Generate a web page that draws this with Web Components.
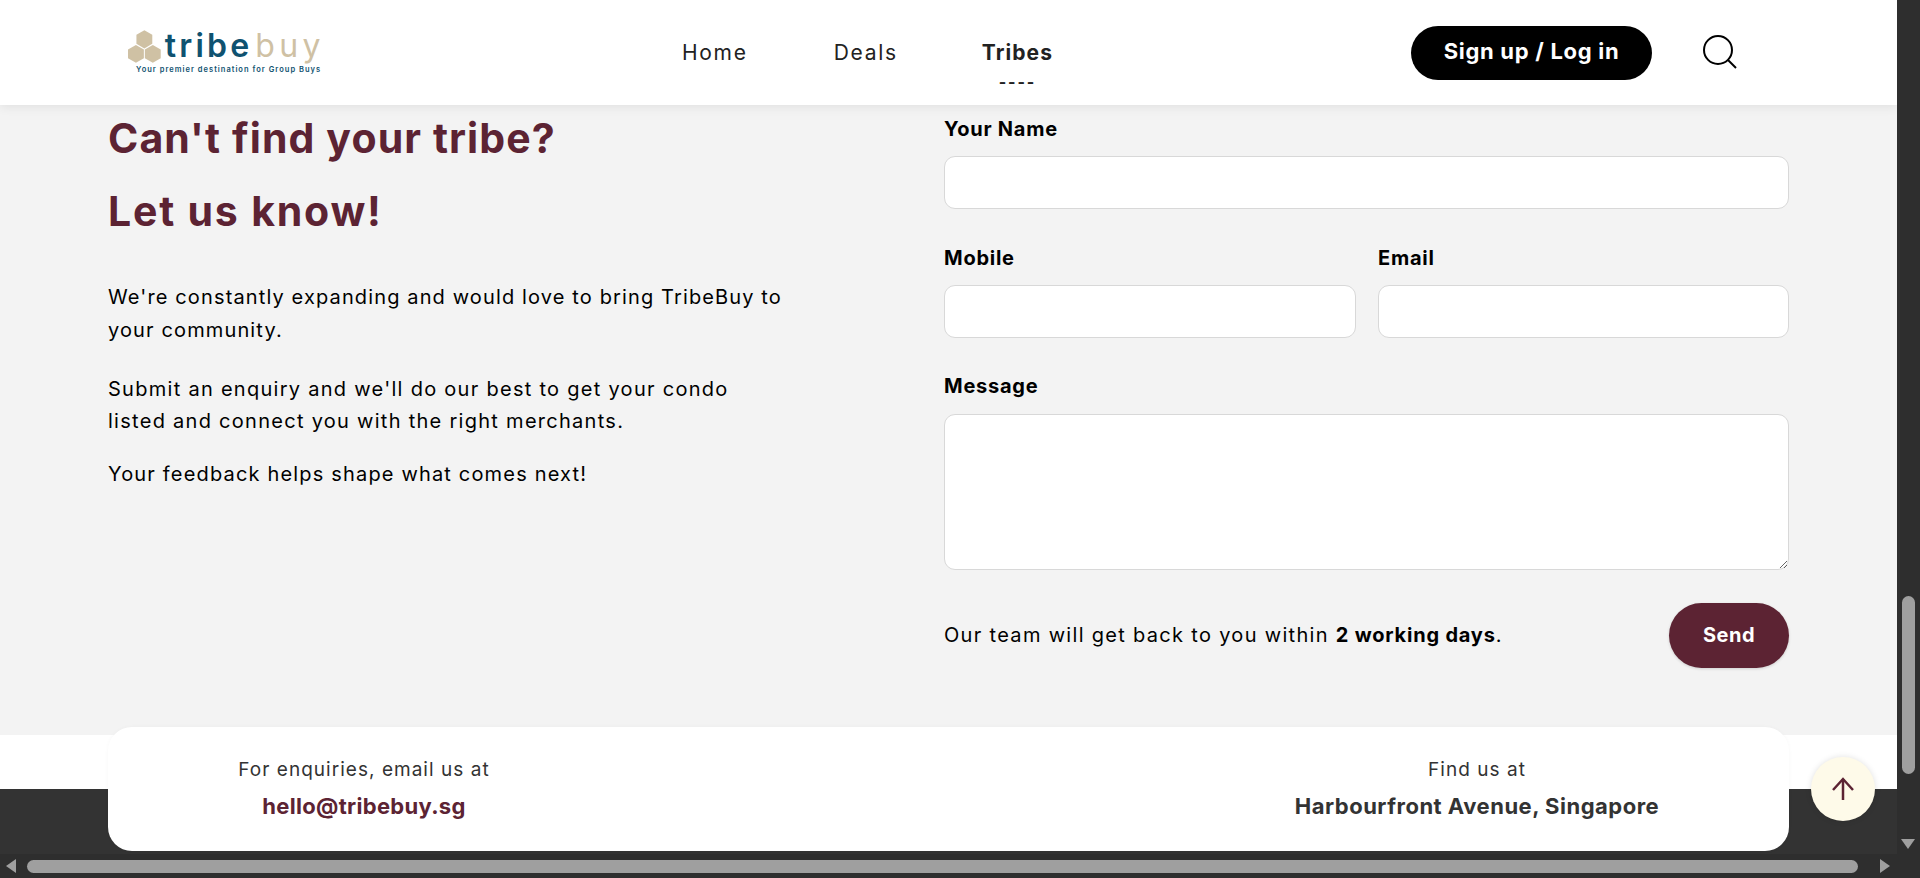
<!DOCTYPE html>
<html lang="en">
<head>
<meta charset="utf-8">
<title>TribeBuy</title>
<style>
  html, body { margin: 0; height: 100%; overflow: hidden; background: #f3f3f3; }
  body { font-family: Inter, "Liberation Sans", sans-serif; }
</style>
</head>
<body>
<app-shell>
  <site-header></site-header>
  <enquiry-section></enquiry-section>
  <contact-strip></contact-strip>
</app-shell>

<script>
class AppShell extends HTMLElement {
  constructor() {
    super();
    this.attachShadow({ mode: "open" }).innerHTML = `
      <style>
        :host { display: grid; grid-template-columns: 1897px 23px; grid-template-rows: 854px 24px; height: 878px; position: relative; background: #2e2e2e; }
        .page { display: flex; flex-direction: column; overflow: hidden; background: #f3f3f3; }
        .vbar { position: relative; }
        .vthumb { position: absolute; left: 5px; top: 596px; width: 13px; height: 178px; border-radius: 7px; background: #9f9f9f; }
        .down { position: absolute; left: 4px; top: 839px; width: 0; height: 0; border-left: 7px solid transparent; border-right: 7px solid transparent; border-top: 10px solid #9f9f9f; }
        .hbar { grid-column: 1 / span 2; display: flex; align-items: center; padding: 0 0 0 6px; }
        .left, .right { width: 0; height: 0; border-top: 7px solid transparent; border-bottom: 7px solid transparent; }
        .left { border-right: 10px solid #9f9f9f; margin-right: 11px; }
        .right { border-left: 10px solid #9f9f9f; margin-left: 22px; }
        .hthumb { width: 1831px; height: 13px; border-radius: 7px; background: #9f9f9f; }
        .fab { position: absolute; left: 1811px; top: 757px; width: 64px; height: 64px; border-radius: 50%; background: #fefae9; box-shadow: 0 0 6px rgba(0,0,0,.12); display: flex; align-items: center; justify-content: center; }
      </style>
      <div class="page"><slot></slot></div>
      <div class="vbar"><div class="vthumb"></div><div class="down"></div></div>
      <div class="hbar"><div class="left"></div><div class="hthumb"></div><div class="right"></div></div>
      <div class="fab">
        <svg width="24" height="24" viewBox="0 0 24 24" fill="none" stroke="#5c2333" stroke-width="2.5"><path d="M12 23V2"/><path d="M2 13L12 2l10 11"/></svg>
      </div>`;
  }
}

class SiteHeader extends HTMLElement {
  constructor() {
    super();
    this.attachShadow({ mode: "open" }).innerHTML = `
      <style>
        :host { display: block; height: 105px; flex: none; background: #fff; box-shadow: 0 2px 10px rgba(0,0,0,.08); position: relative; z-index: 2; }
        .bar { display: flex; align-items: center; height: 100%; padding: 0 0 0 128px; }
        .logo { display: flex; flex-direction: column; width: 197px; flex: none; }
        .mark { display: flex; align-items: center; gap: 4px; height: 33px; }
        .word { font: 600 32px/33px Inter, sans-serif; letter-spacing: 3.2px; color: #0f5270; margin-top: -3px; white-space: nowrap; }
        .word span { color: #cfc1a4; font-weight: 400; letter-spacing: 4.4px; margin-left: 3px; }
        .tag { font: 600 7.5px/10px Inter, sans-serif; letter-spacing: 1.02px; color: #0f5270; margin: 2px 0 0 8px; white-space: nowrap; }
        nav { display: flex; align-items: flex-start; margin-left: 357px; width: 729px; }
        a { font-size: 21px; line-height: 28px; letter-spacing: 1.7px; color: #222; text-decoration: none; position: relative; }
        a + a { margin-left: 86px; }
        a.on { font-weight: 700; letter-spacing: 1.1px; margin-left: 84px; }
        a.on::after { content: "----"; position: absolute; left: 0; right: 0; top: 33px; text-align: center; font-size: 16px; line-height: 20px; letter-spacing: 1.8px; }
        button { font: 700 22px/1 Inter, sans-serif; letter-spacing: .7px; color: #fff; background: #000; border: 0; border-radius: 27px; width: 241px; height: 54px; padding: 0 0 3px; flex: none; }
        .search { margin-left: 50px; flex: none; }
      </style>
      <div class="bar">
        <div class="logo">
          <div class="mark">
            <svg width="33" height="33" viewBox="0 0 33 33" fill="#cfc1a4"><path d="M16.5 0l8 4.6v9.2l-8 4.6-8-4.6V4.600z"/><path d="M8 15l8 4.600v8.800l-8 4.600-8-4.600v-8.800z"/><path d="M25 15l8 4.600v8.800l-8 4.600-8-4.600v-8.800z"/></svg>
            <div class="word">tribe<span>buy</span></div>
          </div>
          <div class="tag">Your premier destination for Group Buys</div>
        </div>
        <nav>
          <a href="#">Home</a><a href="#">Deals</a><a href="#" class="on">Tribes</a>
        </nav>
        <button>Sign up / Log in</button>
        <svg class="search" width="36" height="36" viewBox="0 0 36 36" fill="none" stroke="#000" stroke-width="2"><circle cx="16" cy="15" r="14"/><path d="M26 25l8 8"/></svg>
      </div>`;
  }
}

class EnquirySection extends HTMLElement {
  constructor() {
    super();
    this.attachShadow({ mode: "open" }).innerHTML = `
      <style>
        :host { display: grid; grid-template-columns: 836px 845px; height: 622px; flex: none; padding: 0 108px; box-sizing: border-box; color: #000; font-size: 20px; }
        h2 { margin: 0; font-size: 41px; line-height: 72px; font-weight: 700; letter-spacing: 1.1px; color: #5c2333; }
        .intro h2:first-child { margin-top: -3px; }
        .intro h2 + h2 { margin-top: 1px; letter-spacing: 1.8px; }
        p { margin: 0; line-height: 32.5px; letter-spacing: 1.13px; }
        h2 + p { margin-top: 34px; }
        p + p { margin-top: 27px; line-height: 32px; letter-spacing: 1.28px; }
        p + p + p { margin-top: 21px; line-height: 32.500px; letter-spacing: 1.17px; }
        form { display: flex; flex-direction: column; padding-top: 10px; }
        label { display: block; font-weight: 700; line-height: 28px; margin-bottom: 13px; letter-spacing: .75px; }
        input, textarea { display: block; box-sizing: border-box; width: 100%; border: 1px solid #d8d8d8; border-radius: 11px; background: #fff; height: 53px; margin: 0; outline: 0; padding: 8px 12px; }
        textarea { height: 156px; resize: both; }
        .two { display: grid; grid-template-columns: 412px 411px; gap: 22px; margin-top: 35px; }
        .msg { margin-top: 34px; }
        .msg label { margin-bottom: 14px; }
        .foot { display: flex; align-items: center; justify-content: space-between; margin-top: 33px; }
        .foot span { letter-spacing: 1.31px; margin-top: -2px; }
        .foot b { letter-spacing: .8px; }
        button { font: 700 20px/1 Inter, sans-serif; letter-spacing: .5px; color: #fff; background: #5c2333; border: 0; border-radius: 33px; width: 120px; height: 65px; box-shadow: 0 1px 3px rgba(0,0,0,.15); padding: 0 0 2px; }
      </style>
      <div class="intro">
        <h2>Can't find your tribe?</h2>
        <h2>Let us know!</h2>
        <p>We're constantly expanding and would love to bring TribeBuy to<br>your community.</p>
        <p>Submit an enquiry and we'll do our best to get your condo<br>listed and connect you with the right merchants.</p>
        <p>Your feedback helps shape what comes next!</p>
      </div>
      <form>
        <div><label>Your Name</label><input type="text"></div>
        <div class="two">
          <div><label>Mobile</label><input type="text"></div>
          <div><label>Email</label><input type="text"></div>
        </div>
        <div class="msg"><label>Message</label><textarea></textarea></div>
        <div class="foot">
          <span>Our team will get back to you within <b>2 working days</b>.</span>
          <button type="button">Send</button>
        </div>
      </form>`;
  }
}

class ContactStrip extends HTMLElement {
  constructor() {
    super();
    this.attachShadow({ mode: "open" }).innerHTML = `
      <style>
        :host { display: block; height: 127px; flex: none; padding: 0 108px; background: linear-gradient(#f3f3f3 8px, #fff 8px, #fff 62px, #333 62px); }
        .card { display: grid; grid-template-columns: 512px 1fr 624px; height: 124px; border-radius: 24px; background: #fff; box-shadow: 0 0 4px rgba(0,0,0,.03); }
        .col { text-align: center; align-self: center; color: #333; font-size: 19px; line-height: 28px; letter-spacing: 1.03px; padding-bottom: 2px; }
        .col:last-child { grid-column: 3; }
        .col b { display: block; font-size: 22px; line-height: 30px; margin-top: 7px; letter-spacing: .3px; }
        .col:last-child b { letter-spacing: .5px; }
        .mail { color: #5c2333; }
      </style>
      <div class="card">
        <div class="col">For enquiries, email us at<b class="mail">hello@tribebuy.sg</b></div>
        <div class="col">Find us at<b>Harbourfront Avenue, Singapore</b></div>
      </div>`;
  }
}

customElements.define("app-shell", AppShell);
customElements.define("site-header", SiteHeader);
customElements.define("enquiry-section", EnquirySection);
customElements.define("contact-strip", ContactStrip);
</script>
</body>
</html>
